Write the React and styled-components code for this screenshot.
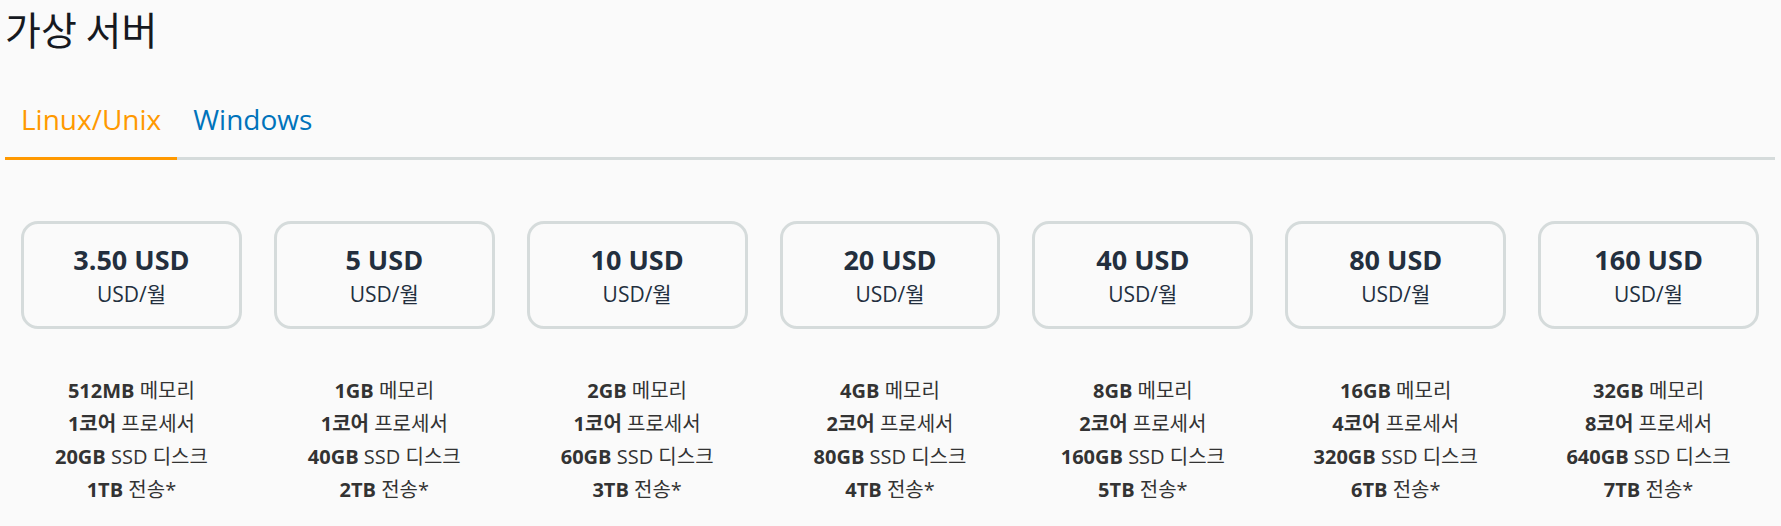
import React, { useState } from 'react'
import styled, { createGlobalStyle } from 'styled-components'

const GlobalStyle = createGlobalStyle`
    body {
        margin: 0;
        background: #fafafa;
        font-family: "Open Sans", "Noto Sans CJK KR", sans-serif;
        color: #16191f;
    }
`

const Page = styled.div`
    padding: 0 6px 0 5px;
`

const Title = styled.h2`
    margin: 4px 0 0;
    font-size: 39px;
    line-height: 48px;
    font-weight: 400;
    font-family: "Noto Sans CJK KR", sans-serif;
    color: #16191f;
`

const TabList = styled.div`
    display: flex;
    margin-top: 47px;
    border-bottom: 3px solid #d5dbdb;
`

const Tab = styled.button`
    background: none;
    border: none;
    border-bottom: 3px solid ${props => (props.active ? '#ff9900' : 'transparent')};
    margin-bottom: -3px;
    padding: 0 16px 18px;
    font-family: "Open Sans", sans-serif;
    font-size: 28px;
    line-height: 40px;
    color: ${props => (props.active ? '#ff9900' : '#0073bb')};
    cursor: pointer;
`

const Plans = styled.div`
    display: grid;
    grid-template-columns: repeat(7, 1fr);
    margin-top: 61px;
`

const Plan = styled.div`
    padding: 0 16px;
    text-align: center;
`

const PriceCard = styled.div`
    height: 108px;
    box-sizing: border-box;
    border: 3px solid #d5dbdb;
    border-radius: 17px;
    display: flex;
    flex-direction: column;
    justify-content: center;
    align-items: center;
    gap: 3px;
`

const Price = styled.div`
    font-size: 27px;
    line-height: 34px;
    font-weight: 700;
    color: #232f3e;
`

const Unit = styled.div`
    font-size: 21px;
    line-height: 28px;
    color: #232f3e;
`

const Specs = styled.ul`
    list-style: none;
    margin: 45px 0 0;
    padding: 0;
    font-size: 20px;
    line-height: 33px;
    color: #333;
`

const Spec = styled.li`
    b {
        font-weight: 700;
    }
`

const plans = [
    { price: '3.50', mem: '512MB', cpu: '1', disk: '20GB', transfer: '1TB' },
    { price: '5', mem: '1GB', cpu: '1', disk: '40GB', transfer: '2TB' },
    { price: '10', mem: '2GB', cpu: '1', disk: '60GB', transfer: '3TB' },
    { price: '20', mem: '4GB', cpu: '2', disk: '80GB', transfer: '4TB' },
    { price: '40', mem: '8GB', cpu: '2', disk: '160GB', transfer: '5TB' },
    { price: '80', mem: '16GB', cpu: '4', disk: '320GB', transfer: '6TB' },
    { price: '160', mem: '32GB', cpu: '8', disk: '640GB', transfer: '7TB' },
]

export default function App() {
    const [tab, setTab] = useState('linux')

    return (
        <Page>
            <GlobalStyle />
            <Title>가상 서버</Title>
            <TabList>
                <Tab active={tab === 'linux'} onClick={() => setTab('linux')}>Linux/Unix</Tab>
                <Tab active={tab === 'windows'} onClick={() => setTab('windows')}>Windows</Tab>
            </TabList>
            <Plans>
                {plans.map(p => (
                    <Plan key={p.price}>
                        <PriceCard>
                            <Price>{p.price} USD</Price>
                            <Unit>USD/월</Unit>
                        </PriceCard>
                        <Specs>
                            <Spec><b>{p.mem}</b> 메모리</Spec>
                            <Spec><b>{p.cpu}코어</b> 프로세서</Spec>
                            <Spec><b>{p.disk}</b> SSD 디스크</Spec>
                            <Spec><b>{p.transfer}</b> 전송*</Spec>
                        </Specs>
                    </Plan>
                ))}
            </Plans>
        </Page>
    )
}
